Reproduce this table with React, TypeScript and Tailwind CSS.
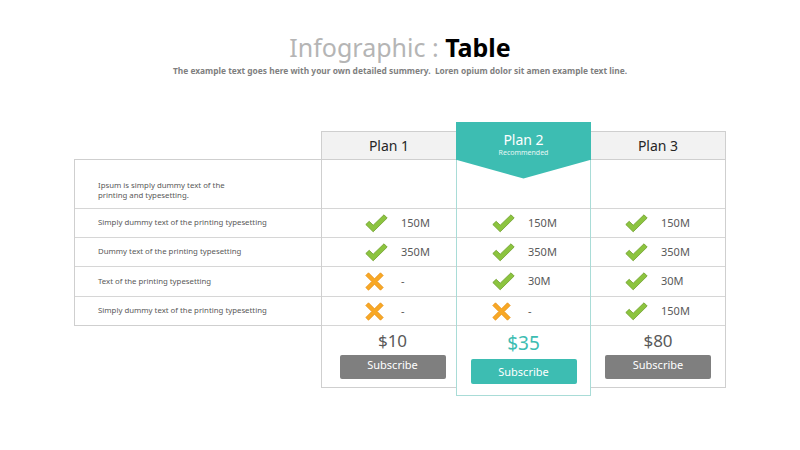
import React from "react";

type Cell = { ok: boolean; value: string };

interface Plan {
  name: string;
  price: string;
  cells: Cell[];
}

const FEATURES = [
  "Simply dummy text of the printing typesetting",
  "Dummy text of the printing typesetting",
  "Text of the printing typesetting",
  "Simply dummy text of the printing typesetting",
];

const ROW_HEIGHTS = ["h-[29px]", "h-[29px]", "h-[30px]", "h-[29px]"];

const PLANS: Plan[] = [
  {
    name: "Plan 1",
    price: "$10",
    cells: [
      { ok: true, value: "150M" },
      { ok: true, value: "350M" },
      { ok: false, value: "-" },
      { ok: false, value: "-" },
    ],
  },
  {
    name: "Plan 2",
    price: "$35",
    cells: [
      { ok: true, value: "150M" },
      { ok: true, value: "350M" },
      { ok: true, value: "30M" },
      { ok: false, value: "-" },
    ],
  },
  {
    name: "Plan 3",
    price: "$80",
    cells: [
      { ok: true, value: "150M" },
      { ok: true, value: "350M" },
      { ok: true, value: "30M" },
      { ok: true, value: "150M" },
    ],
  },
];

function CheckIcon() {
  return (
    <svg width="23" height="19" viewBox="0 0 23 19">
      <polygon
        points="0.8,10.5 4.2,7.3 8.2,11.2 19,0.8 22.2,4 8.2,17.8"
        fill="#8cc43f"
        stroke="#6e9e2c"
        strokeWidth="0.8"
        strokeLinejoin="round"
      />
    </svg>
  );
}

function CrossIcon() {
  return (
    <svg width="19" height="19" viewBox="0 0 19 19">
      <polygon
        points="3.5,0.8 9.5,6.8 15.5,0.8 18.2,3.5 12.2,9.5 18.2,15.5 15.5,18.2 9.5,12.2 3.5,18.2 0.8,15.5 6.8,9.5 0.8,3.5"
        fill="#f8a825"
        stroke="#e8931a"
        strokeWidth="0.8"
        strokeLinejoin="round"
      />
    </svg>
  );
}

function FeatureCells({ plan, padClass }: { plan: Plan; padClass: string }) {
  return (
    <>
      {plan.cells.map((c, i) => (
        <div
          key={i}
          className={`${ROW_HEIGHTS[i]} flex items-center border-b border-[#d6d6d6] ${padClass}`}
        >
          <div className="w-[23px] flex items-center">{c.ok ? <CheckIcon /> : <CrossIcon />}</div>
          <span className="ml-[13px] text-[11px] text-[#595959]">{c.value}</span>
        </div>
      ))}
    </>
  );
}

export default function App() {
  const [p1, p2, p3] = PLANS;
  return (
    <div
      className="w-[800px] h-[450px] bg-white overflow-hidden"
      style={{ fontFamily: '"Noto Sans", "Open Sans", sans-serif' }}
    >
      {/* Title */}
      <div className="pt-[32px] flex flex-col items-center">
        <h1 className="text-[25px] leading-[30px] text-[#b5b5b5] font-normal">
          Infographic : <span className="font-bold text-black">Table</span>
        </h1>
        <p className="mt-[4px] text-[8.4px] leading-[10px] font-bold text-[#7f7f7f]">
          The example text goes here with your own detailed summery.&nbsp; Loren opium dolor sit amen example text line.
        </p>
      </div>

      {/* Table */}
      <div className="mt-[46px] ml-[74px] flex items-start">
        {/* Feature labels */}
        <div className="w-[247px] mt-[37px] border-t border-l border-[#cfcfcf] text-[7.8px] text-[#595959]">
          <div className="h-[49px] border-b border-[#d6d6d6] pl-[23px] pt-[20px] leading-[10px]">
            Ipsum is simply dummy text of the
            <br />
            printing and typesetting.
          </div>
          {FEATURES.map((f, i) => (
            <div
              key={i}
              className={`${ROW_HEIGHTS[i]} flex items-center pl-[23px] ${
                i === FEATURES.length - 1 ? "border-b border-[#cfcfcf]" : "border-b border-[#d6d6d6]"
              }`}
            >
              {f}
            </div>
          ))}
        </div>

        {/* Plan 1 */}
        <div className="w-[135px] mt-[9px] border-l border-t border-[#cfcfcf]">
          <div className="h-[28px] bg-[#f2f2f2] border-b border-[#cfcfcf] flex items-center justify-center text-[14px] text-[#262626]">
            {p1.name}
          </div>
          <div className="h-[49px] border-b border-[#d6d6d6]" />
          <FeatureCells plan={p1} padClass="pl-[43px]" />
          <div className="h-[62px] border-b border-[#cfcfcf] flex flex-col items-center pt-[5px] pl-[7px]">
            <span className="text-[17px] leading-[20px] text-[#595959]">{p1.price}</span>
            <button className="mt-[4px] w-[106px] h-[24px] rounded-[2px] bg-[#7f7f7f] text-white text-[11px] leading-[20px] pb-[4px]">
              Subscribe
            </button>
          </div>
        </div>

        {/* Plan 2 */}
        <div className="w-[135px]">
          <div className="h-[38px] bg-[#3dbdb2] flex flex-col items-center pt-[10px] text-white">
            <span className="text-[14px] leading-[16px]">{p2.name}</span>
            <span className="text-[7px] leading-[10px] text-[#e6f7f5]">Recommended</span>
          </div>
          <div className="border-x border-b border-[#a9dcd7]">
            <div className="h-[49px] border-b border-[#d6d6d6]">
              <svg width="133" height="19" viewBox="0 0 133 19" className="block">
                <polygon points="0,0 133,0 66.5,18.5" fill="#3dbdb2" />
              </svg>
            </div>
            <FeatureCells plan={p2} padClass="pl-[35px]" />
            <div className="h-[69px] flex flex-col items-center pt-[5px]">
              <span className="text-[19px] leading-[24px] text-[#3dbdb2]">{p2.price}</span>
              <button className="mt-[4px] w-[106px] h-[25px] rounded-[2px] bg-[#3dbdb2] text-white text-[11px] leading-[20px]">
                Subscribe
              </button>
            </div>
          </div>
        </div>

        {/* Plan 3 */}
        <div className="w-[135px] mt-[9px] border-r border-t border-[#cfcfcf]">
          <div className="h-[28px] bg-[#f2f2f2] border-b border-[#cfcfcf] flex items-center justify-center text-[14px] text-[#262626]">
            {p3.name}
          </div>
          <div className="h-[49px] border-b border-[#d6d6d6]" />
          <FeatureCells plan={p3} padClass="pl-[34px]" />
          <div className="h-[62px] border-b border-[#cfcfcf] flex flex-col items-center pt-[5px]">
            <span className="text-[17px] leading-[20px] text-[#595959]">{p3.price}</span>
            <button className="mt-[4px] w-[106px] h-[24px] rounded-[2px] bg-[#7f7f7f] text-white text-[11px] leading-[20px] pb-[4px]">
              Subscribe
            </button>
          </div>
        </div>
      </div>
    </div>
  );
}
